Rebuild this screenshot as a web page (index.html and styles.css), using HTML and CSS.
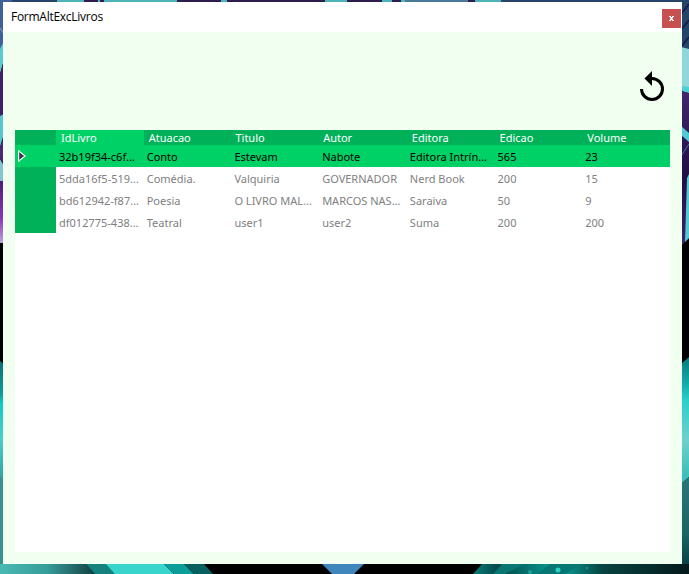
FILE: index.html
```html
<!DOCTYPE html>
<html lang="pt">
<head>
<meta charset="utf-8">
<title>FormAltExcLivros</title>
<link rel="stylesheet" href="styles.css">
</head>
<body>
<svg class="wallpaper" viewBox="0 0 689 574" aria-hidden="true">
  <defs>
    <linearGradient id="violet" x1="0" y1="0" x2="0" y2="1"><stop offset="0" stop-color="#42286b"/><stop offset=".55" stop-color="#220d46"/><stop offset="1" stop-color="#3b246b"/></linearGradient>
    <linearGradient id="purple" x1="0" y1="0" x2="0" y2="1"><stop offset="0" stop-color="#4a1d78"/><stop offset=".6" stop-color="#8b35bd"/><stop offset="1" stop-color="#b9a5dc"/></linearGradient>
    <linearGradient id="teal" x1="0" y1="0" x2="0" y2="1"><stop offset="0" stop-color="#087878"/><stop offset=".2" stop-color="#12aaa6"/><stop offset=".35" stop-color="#2cd0cb"/><stop offset=".65" stop-color="#70cfcc"/><stop offset="1" stop-color="#32bcb5"/></linearGradient>
    <linearGradient id="tealLeft" x1="0" y1="0" x2="0" y2="1"><stop offset="0" stop-color="#087070"/><stop offset=".28" stop-color="#109b9b"/><stop offset=".35" stop-color="#12c8c8"/><stop offset=".65" stop-color="#4ccdca"/><stop offset="1" stop-color="#31a09d"/></linearGradient>
    <linearGradient id="deep" x1="0" y1="0" x2="0" y2="1"><stop offset="0" stop-color="#2a7777"/><stop offset=".6" stop-color="#1b6464"/><stop offset="1" stop-color="#073438"/></linearGradient>
    <linearGradient id="floorLeft"><stop offset="0" stop-color="#48b9b3"/><stop offset=".5" stop-color="#369c99"/><stop offset="1" stop-color="#123f42"/></linearGradient>
    <linearGradient id="floorRight"><stop offset="0" stop-color="#087d7b"/><stop offset=".12" stop-color="#034746"/><stop offset=".4" stop-color="#0aa39b"/><stop offset=".6" stop-color="#064341"/><stop offset="1" stop-color="#06191b"/></linearGradient>
  </defs>
  <rect width="689" height="574"/>
  <rect width="689" height="3" fill="#2f1d4c"/>
  <path d="M0 0H57V3H0ZM501 0H689V3H501Z" fill="#284468"/>
  <path d="M57 0H84V3H57ZM98 0H100V3H98ZM104 0H177V3H104ZM221 0H227V3H221ZM325 0H347V3H325ZM382 0H392V3H382ZM401 0H405V3H401ZM475 0H501V3H475Z" fill="#4db5b7"/>
  <path d="M405 0H468V3H405Z" fill="#487b99"/>
  <path d="M0 0H12V45L0 50Z" fill="#40609a"/>
  <path d="M0 28L4 34" stroke="#8d9fc5"/>
  <path d="M0 49L4 41V60L0 74Z" fill="#5cc9cf"/>
  <path d="M0 74L4 60V134H0Z" fill="#3d2065"/>
  <path d="M0 116L4 114V134L0 147Z" fill="#58c5ce"/>
  <path d="M0 147L4 136V165L0 158Z" fill="#4b2679"/>
  <path d="M0 159L4 166V182H0Z" fill="#84c5d1"/>
  <rect y="181" width="4" height="62" fill="url(#purple)"/>
  <path d="M0 361L4 364V480H0Z" fill="url(#tealLeft)"/>
  <rect y="478" width="4" height="96" fill="#37918f"/>
  <rect x="681" width="8" height="50" fill="#254568"/>
  <path d="M681 14L689 4M681 30L689 20M681 47L689 37" stroke="#171e49" stroke-width="2"/>
  <path d="M681 47L689 49V93L681 90Z" fill="#91d6d9"/>
  <path d="M681 86L689 87V93L681 91Z" fill="#4dced2"/>
  <path d="M681 91L689 93V238L681 246Z" fill="url(#violet)"/>
  <path d="M681 126L689 133V142L681 135ZM687 178L689 174V238L685 242Z" fill="#52cbd3"/>
  <path d="M681 156L689 144" stroke="#397795"/>
  <path d="M681 364L689 357V477L681 484Z" fill="url(#teal)"/>
  <path d="M681 484L689 477V574H681Z" fill="url(#deep)"/>
  <path d="M0 564H86L95 574H0Z" fill="url(#floorLeft)"/>
  <path d="M86 564H107L118 574H95Z" fill="#15827f"/>
  <path d="M106 564H164L174 574H115Z" fill="#38d5cd"/>
  <path d="M164 564H184L194 574H174Z" fill="#0c9d9b"/>
  <path d="M184 564H204L213 574H194Z" fill="#06605f"/>
  <path d="M322 564H364L354 574H332Z" fill="#3f86bd"/>
  <path d="M482 564H689V574H473Z" fill="url(#floorRight)"/>
  <path d="M502 564H525L505 574H493ZM550 564H582L565 574H537Z" fill="#087673"/>
  <circle cx="530" cy="572" r="2" fill="#18a29c"/><circle cx="558" cy="570" r="2.5" fill="#2bd2c3"/><circle cx="587" cy="568" r="1.5" fill="#15847f"/>
</svg>
<main class="window">
  <header class="titlebar">
    <h1 class="title">FormAltExcLivros</h1>
    <button class="close" aria-label="Fechar"><svg width="5" height="5" viewBox="0 0 5 5"><path d="M0 0H2V1H3V0H5V1H4V2H3.500V3H4V4H5V5H3V4H2V5H0V4H1V3H1.500V2H1V1H0Z" fill="#fff"/></svg></button>
  </header>
  <div class="toolbar">
    <svg class="reload" width="24" height="30" viewBox="0 0 24 30" aria-hidden="true"><path d="M1.500 18A10.500 10.500 0 1 0 12 7.500" fill="none" stroke="#000" stroke-width="3"/><path d="M12 0V15L4.500 7.500Z"/></svg>
  </div>
  <div class="grid">
    <div class="row head"><span class="marker"></span><span class="current">IdLivro</span><span>Atuacao</span><span class="tight">Titulo</span><span class="tight">Autor</span><span>Editora</span><span>Edicao</span><span>Volume</span></div>
    <div class="row selected"><span class="marker"><svg width="8" height="12" viewBox="0 0 8 12"><path d="M.6 .8V11.200L7 6Z" fill="#40304a" stroke="#e8fff0" stroke-width="1.200"/></svg></span><span>32b19f34-c6f...</span><span>Conto</span><span>Estevam</span><span>Nabote</span><span>Editora Intrín...</span><span>565</span><span>23</span></div>
    <div class="row"><span class="marker"></span><span>5dda16f5-519...</span><span>Comédia.</span><span>Valquiria</span><span>GOVERNADOR</span><span>Nerd Book</span><span>200</span><span>15</span></div>
    <div class="row"><span class="marker"></span><span>bd612942-f87...</span><span>Poesia</span><span>O LIVRO MAL...</span><span>MARCOS NAS...</span><span>Saraiva</span><span>50</span><span>9</span></div>
    <div class="row"><span class="marker"></span><span>df012775-438...</span><span>Teatral</span><span>user1</span><span>user2</span><span>Suma</span><span>200</span><span>200</span></div>
  </div>
</main>
</body>
</html>
```
FILE: styles.css
```css
* { box-sizing: border-box; }
body { margin: 0; height: 574px; padding: 2px 7px 10px 3px; overflow: hidden; background: #000; font-family: "Noto Sans", sans-serif; }
.wallpaper { position: absolute; inset: 0; width: 689px; height: 574px; z-index: -1; }
.window { display: flex; flex-direction: column; height: 562px; padding-bottom: 12px; background: #f0fff0; }
.titlebar { display: flex; justify-content: space-between; height: 30px; padding: 7px 1px 0 8px; background: #fff; }
.title { margin: 0; font: 400 12px/16px "Open Sans", sans-serif; letter-spacing: -.27px; color: #000; }
.close { display: flex; align-items: center; justify-content: center; width: 19px; height: 19px; padding: 0; border: 0; background: #c75050; }
.toolbar { display: flex; justify-content: flex-end; height: 98px; padding: 39px 18px 0 0; }
.grid { flex: 1; margin: 0 12px; background: #fff; }
.row { display: grid; grid-template-columns: 41px repeat(7, minmax(0, 1fr)); height: 22px; font-size: 11px; line-height: 24px; color: #808080; }
.row span { padding-left: 3px; white-space: nowrap; overflow: hidden; }
.row .marker { background: #00b159; }
.head { height: 15px; line-height: 16px; background: #00b159; color: #fff; }
.head span { padding-left: 5px; }
.head .tight { padding-left: 4px; }
.head .current { background: #00d166; }
.selected { background: #00d166; color: #000; }
.selected .marker { display: flex; align-items: center; background: #00d166; }
```
